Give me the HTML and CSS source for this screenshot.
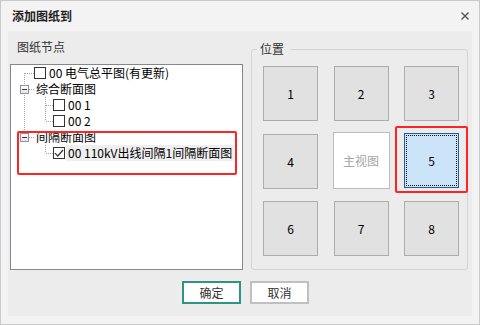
FILE: index.html
```html
<!DOCTYPE html>
<html lang="zh">
<head>
<meta charset="utf-8">
<title>添加图纸到</title>
<link rel="stylesheet" href="styles.css">
</head>
<body>
<div class="window">
  <div class="titlebar">
    <span class="title">添加图纸到</span>
    <svg class="close" width="8" height="8" viewBox="0 0 8 8"><path d="M0.5 0.5L7.5 7.5M7.5 0.5L0.5 7.5" stroke="#555" stroke-width="1.4" fill="none"/></svg>
  </div>
  <div class="frame">
    <div class="panel">
      <div class="main">
        <section class="left">
          <div class="label">图纸节点</div>
          <div class="tree">
            <div class="row">
              <span class="g g0 start"></span><span class="cb"></span><span class="txt">00 电气总平图(有更新)</span>
            </div>
            <div class="row">
              <span class="g g0 tee"><span class="exp"></span></span><span class="txt node">综合断面图</span>
            </div>
            <div class="row">
              <span class="g g0 pass"></span><span class="g g1 tee"></span><span class="cb"></span><span class="txt">00 1</span>
            </div>
            <div class="row">
              <span class="g g0 pass"></span><span class="g g1 ell"></span><span class="cb"></span><span class="txt">00 2</span>
            </div>
            <div class="hl">
              <div class="row">
                <span class="g g0 ell"><span class="exp"></span></span><span class="txt node">间隔断面图</span>
              </div>
              <div class="row">
                <span class="g g0"></span><span class="g g1 ell"></span><span class="cb checked"><svg width="10" height="10" viewBox="0 0 10 10"><path d="M1 5.2L3.8 8L9 2" stroke="#333" stroke-width="1.2" fill="none"/></svg></span><span class="txt sel">00 110kV出线间隔1间隔断面图</span>
              </div>
            </div>
          </div>
        </section>
        <fieldset class="group">
          <legend>位置</legend>
          <div class="grid">
            <button class="pos">1</button>
            <button class="pos">2</button>
            <button class="pos">3</button>
            <button class="pos">4</button>
            <button class="pos view">主视图</button>
            <button class="pos current">5</button>
            <button class="pos">6</button>
            <button class="pos">7</button>
            <button class="pos">8</button>
          </div>
        </fieldset>
      </div>
      <div class="footer">
        <button class="btn ok">确定</button>
        <button class="btn">取消</button>
      </div>
    </div>
  </div>
</div>
</body>
</html>
```
FILE: styles.css
```css
* { box-sizing: border-box; }
html, body { margin: 0; padding: 0; }
body { background: #f3f3f3; }

.window {
  width: 480px;
  height: 325px;
  border: 1px solid #c9c9c9;
  background: #f3f3f3;
  font-family: "Noto Sans CJK SC", "Microsoft YaHei", sans-serif;
  font-size: 12px;
  color: #000;
  display: flex;
  flex-direction: column;
}

.titlebar {
  height: 30px;
  flex: none;
  display: flex;
  align-items: center;
  justify-content: space-between;
  padding: 0 10px 0 11px;
}
.title { font-weight: bold; color: #1e1e1e; line-height: 16px; }
.close { display: block; }

.frame {
  flex: 1;
  display: flex;
  padding: 0 7px 8px 7px;
}
.panel {
  flex: 1;
  background: #ececec;
  display: flex;
  flex-direction: column;
}

.main {
  display: flex;
  align-items: flex-start;
  padding-left: 2px;
}

.left { width: 233px; flex: none; }
.label {
  height: 33px;
  padding: 8px 0 0 7px;
  line-height: 16px;
  color: #333;
}

.tree {
  height: 206px;
  border: 1px solid #828790;
  background: #fff;
  padding: 0 0 0 4px;
  --vd: repeating-linear-gradient(to bottom, #a0a0a0 0 1px, transparent 1px 2px);
  --hd: repeating-linear-gradient(to right, #a0a0a0 0 1px, transparent 1px 2px);
}
.row {
  display: flex;
  align-items: center;
  height: 16px;
  line-height: 16px;
  white-space: nowrap;
}
.g {
  flex: none;
  width: 19px;
  height: 16px;
  display: flex;
  align-items: center;
  background-repeat: no-repeat;
}
.g0 { --x: 9px; --hw: 9px; }
.g1 { --x: 11px; --hw: 7px; }
.pass {
  background-image: var(--vd);
  background-size: 1px 16px;
  background-position: var(--x) 0;
}
.tee {
  background-image: var(--vd), var(--hd);
  background-size: 1px 16px, var(--hw) 1px;
  background-position: var(--x) 0, calc(var(--x) + 1px) 8px;
}
.ell {
  background-image: var(--vd), var(--hd);
  background-size: 1px 8px, var(--hw) 1px;
  background-position: var(--x) 0, calc(var(--x) + 1px) 8px;
}
.start {
  background-image: var(--vd), var(--hd);
  background-size: 1px 8px, var(--hw) 1px;
  background-position: var(--x) 8px, calc(var(--x) + 1px) 8px;
}
.exp {
  width: 9px;
  height: 9px;
  margin-left: 5px;
  border: 1px solid #949494;
  background: linear-gradient(#2b3b55, #2b3b55) center / 5px 1px no-repeat, linear-gradient(#ffffff, #e4e4e4);
}
.cb {
  flex: none;
  width: 12px;
  height: 12px;
  border: 1px solid #333;
  background: #fff;
  display: flex;
  align-items: center;
  justify-content: center;
}
.cb svg { display: block; }
.txt {
  margin-left: 1px;
  padding: 0 2px;
  height: 16px;
}
.txt.node { margin-left: 0; }
.txt.sel { background: #efefef; }

.hl { position: relative; }
.hl::after {
  content: "";
  position: absolute;
  left: 2px;
  top: 2px;
  width: 216px;
  height: 40px;
  border: 2px solid #ff2424;
  border-radius: 2px;
}

.group {
  flex: none;
  width: 217px;
  margin: 10px 0 0 8px;
  padding: 0 8px 13px 11px;
  border: 1px solid #d5d5d5;
  border-radius: 3px;
  min-width: 0;
}
.group legend {
  margin-left: -6px;
  padding: 0 7px 0 3px;
  line-height: 16px;
  color: #333;
}
.grid {
  display: grid;
  grid-template-columns: repeat(3, 55px);
  grid-template-rows: repeat(3, 55px);
  justify-content: space-between;
  align-content: space-between;
  width: 196px;
  height: 190px;
  margin-top: 9px;
}
.pos {
  width: 55px;
  height: 55px;
  margin: 0;
  padding: 0;
  border: 1px solid #adadad;
  background: #e1e1e1;
  font: inherit;
  color: #000;
}
.pos.view {
  width: 57px;
  height: 57px;
  margin: -2px -1px 0 -1px;
  background: #fff;
  border-color: #bcbcbc;
  color: #a6a6a6;
}
.pos.current {
  position: relative;
  margin-top: -1px;
  background: #cce4f7;
  border-color: #1461a8;
  outline: 1px dotted #000;
  outline-offset: -3px;
}
.pos.current::after {
  content: "";
  position: absolute;
  left: -10px;
  top: -8px;
  right: -10px;
  bottom: -6px;
  border: 2px solid #ff2424;
  border-radius: 2px;
}

.footer {
  display: flex;
  justify-content: center;
  gap: 9px;
  padding: 11px 0 0 11px;
}
.btn {
  width: 59px;
  height: 23px;
  margin: 0;
  padding: 0;
  background: #fff;
  border: 2px solid #c0c0c0;
  font: inherit;
  color: #333;
}
.btn.ok { border-color: #2f9484; }
```
